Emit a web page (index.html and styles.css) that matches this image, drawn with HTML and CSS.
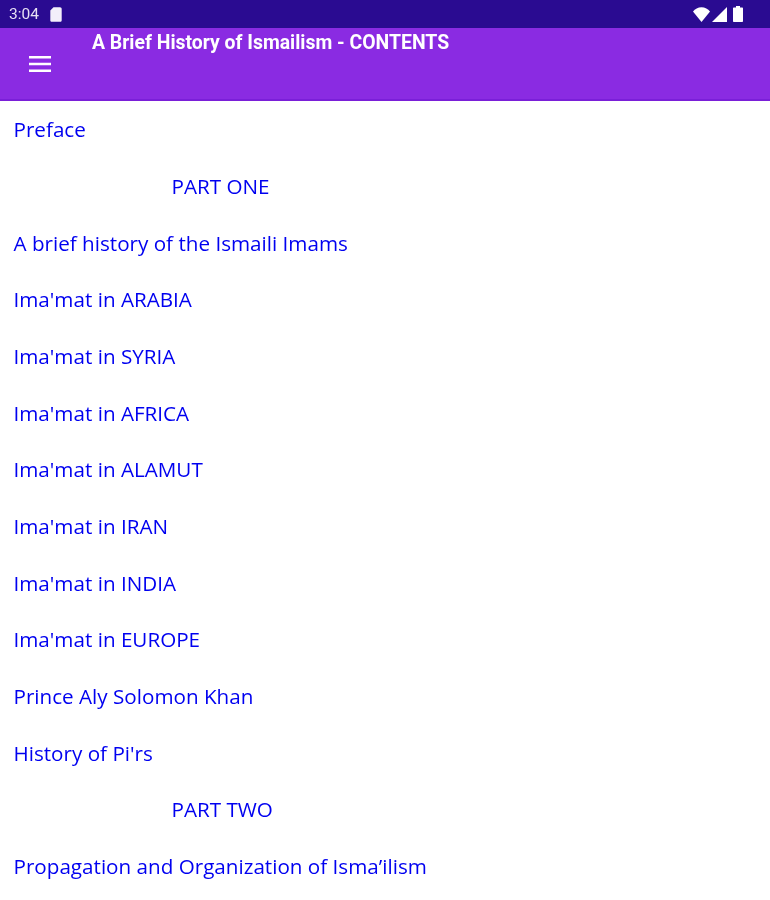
FILE: index.html
```html
<!DOCTYPE html>
<html lang="en">
<head>
    <meta charset="UTF-8">
    <meta name="viewport" content="width=device-width, initial-scale=1.0">
    <title>A Brief History of Ismailism - CONTENTS</title>
    <link rel="stylesheet" href="styles.css">
</head>
<body>
    <div class="status-bar">
        <div class="status-left">
            <span class="clock">3:04</span>
            <svg class="sd-icon" width="12" height="15" viewBox="0 0 12 15"><path d="M3.5 0.3H10C11 0.3 11.7 1 11.7 2V13.2C11.7 14.1 11 14.8 10.1 14.8H1.9C1 14.8 0.3 14.1 0.3 13.2V3.5Z" fill="#f3effa"/></svg>
        </div>
        <div class="status-right">
            <svg class="wifi" width="17" height="15" viewBox="0 0 17 15"><path d="M0 4.5C2 1.8 5 0.2 8.5 0.2S15 1.8 17 4.5L8.5 15Z" fill="#fff"/></svg>
            <svg class="signal" width="15" height="15" viewBox="0 0 15 15"><path d="M15 0V15H0Z" fill="#fff"/></svg>
            <svg class="battery" width="10" height="16" viewBox="0 0 10 16"><path d="M3 0H7V1.5H9C9.6 1.5 10 1.9 10 2.5V15C10 15.6 9.6 16 9 16H1C0.4 16 0 15.6 0 15V2.5C0 1.9 0.4 1.5 1 1.5H3Z" fill="#fff"/></svg>
        </div>
    </div>
    <header class="app-bar">
        <svg class="menu-icon" width="24" height="18" viewBox="0 0 24 18"><path d="M1 2.3H23M1 9H23M1 15.7H23" stroke="#fff" stroke-width="2.4"/></svg>
        <h1>A Brief History of Ismailism - CONTENTS</h1>
    </header>
    <main class="contents">
        <a href="#">Preface</a>
        <a href="#" class="part">PART ONE</a>
        <a href="#">A brief history of the Ismaili Imams</a>
        <a href="#">Ima'mat in ARABIA</a>
        <a href="#">Ima'mat in SYRIA</a>
        <a href="#">Ima'mat in AFRICA</a>
        <a href="#">Ima'mat in ALAMUT</a>
        <a href="#">Ima'mat in IRAN</a>
        <a href="#">Ima'mat in INDIA</a>
        <a href="#">Ima'mat in EUROPE</a>
        <a href="#">Prince Aly Solomon Khan</a>
        <a href="#">History of Pi'rs</a>
        <a href="#" class="part">PART TWO</a>
        <a href="#">Propagation and Organization of Isma’ilism</a>
    </main>
</body>
</html>
```

FILE: styles.css
```css
html, body {
    height: 900px;
    overflow: hidden;
}
body {
    font-family: "Open Sans", sans-serif;
    margin: 0;
    padding: 0;
    background-color: #fff;
}
/* the reference is a soft, upscaled capture */
.status-bar, .app-bar, .contents {
    filter: blur(0.45px);
}
.status-bar {
    height: 28px;
    background-color: #2a0b91;
    display: flex;
    justify-content: space-between;
    align-items: center;
    padding: 0 27px 0 9px;
    box-sizing: border-box;
}
.status-left {
    display: flex;
    align-items: center;
    gap: 11px;
}
.clock {
    font-family: Roboto, sans-serif;
    font-size: 15.5px;
    color: #e6e0f3;
}
.status-right {
    display: flex;
    align-items: center;
    gap: 2px;
}
.battery {
    margin-left: 4px;
}
.app-bar {
    height: 73px;
    box-sizing: border-box;
    background-color: #8a2be2;
    border-bottom: 2px solid #7a1fd8;
    display: flex;
    padding-left: 28px;
    color: #fff;
}
.menu-icon {
    margin-top: 27px;
}
.app-bar h1 {
    font-family: Roboto, sans-serif;
    font-size: 19.4px;
    font-weight: 700;
    line-height: 30px;
    margin: 0 0 0 40px;
}
.contents {
    display: flex;
    flex-direction: column;
    padding: 0.4px 0 0 13.5px;
}
.contents a {
    height: 56.68px;
    line-height: 57px;
    font-size: 20.65px;
    color: #0000f0;
    text-decoration: none;
    white-space: nowrap;
}
.contents .part {
    padding-left: 158px;
}
```
